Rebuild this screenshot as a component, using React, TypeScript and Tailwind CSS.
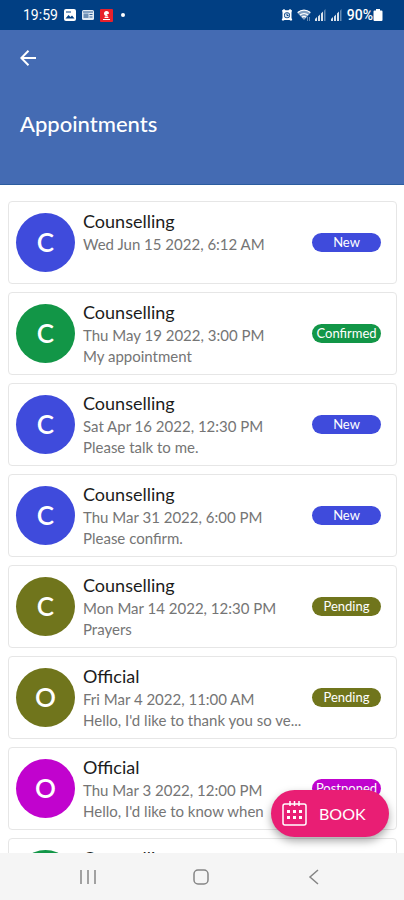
import React from 'react';

type Status = 'New' | 'Confirmed' | 'Pending' | 'Postponed';

interface Appointment {
  id: number;
  type: string;
  date: string;
  note?: string;
  status: Status;
}

const appointments: Appointment[] = [
  { id: 1, type: 'Counselling', date: 'Wed Jun 15 2022, 6:12 AM', status: 'New' },
  { id: 2, type: 'Counselling', date: 'Thu May 19 2022, 3:00 PM', note: 'My appointment', status: 'Confirmed' },
  { id: 3, type: 'Counselling', date: 'Sat Apr 16 2022, 12:30 PM', note: 'Please talk to me.', status: 'New' },
  { id: 4, type: 'Counselling', date: 'Thu Mar 31 2022, 6:00 PM', note: 'Please confirm.', status: 'New' },
  { id: 5, type: 'Counselling', date: 'Mon Mar 14 2022, 12:30 PM', note: 'Prayers', status: 'Pending' },
  { id: 6, type: 'Official', date: 'Fri Mar 4 2022, 11:00 AM', note: "Hello, I'd like to thank you so ve...", status: 'Pending' },
  { id: 7, type: 'Official', date: 'Thu Mar 3 2022, 12:00 PM', note: "Hello, I'd like to know when", status: 'Postponed' },
  { id: 8, type: 'Counselling', date: 'Wed Mar 2 2022, 10:00 AM', status: 'Confirmed' },
];

const statusColors: Record<Status, string> = {
  New: 'bg-[#3f4bdc]',
  Confirmed: 'bg-[#129647]',
  Pending: 'bg-[#70751c]',
  Postponed: 'bg-[#c103ce]',
};

const SignalIcon: React.FC = () => (
  <svg className="h-3.5 w-3" viewBox="0 0 12 14" fill="#fff" aria-hidden="true">
    <path d="M0 13v-2l2-2v4zM3 13V8.500l2-2V13zM6 13V5.500L8 3.500V13z" opacity=".85" />
    <path d="M9 13V2.500l1.500-1.500v12z" opacity=".4" />
  </svg>
);

const StatusBar: React.FC = () => (
  <div className="flex h-[30px] shrink-0 items-center justify-between bg-[#013f83] pr-[21px] pl-[23px] font-[Roboto,sans-serif] text-sm text-white">
    <div className="flex items-center gap-1.5">
      <span>19:59</span>
      <svg className="h-3 w-3" viewBox="0 0 12 12" aria-hidden="true">
        <rect width="12" height="12" rx="2" fill="#fff" />
        <path d="M1.500 9.500 4.500 6l2 2L8 6.500l2.500 3z" fill="#013f83" />
        <path d="M2 2.500h5v1H2z" fill="#013f83" />
      </svg>
      <svg className="h-3 w-3" viewBox="0 0 12 12" aria-hidden="true">
        <rect y="1" width="12" height="10" rx="1.500" fill="#dfe9f3" />
        <path d="M1.500 4.500h5v4.500h-5z" fill="#6d8fb4" />
        <path d="M1 2.500h10v1H1zM7.500 5h3v1h-3zM7.500 7.500h3v1h-3z" fill="#2d5f96" />
      </svg>
      <svg className="h-[13px] w-[13px]" viewBox="0 0 13 13" aria-hidden="true">
        <rect width="13" height="13" rx="1" fill="#e8212b" />
        <path d="M6.500 2a2.500 2.500 0 1 0 1.700 4.300L6.500 5.500l2.400-.7A2.500 2.500 0 0 0 6.500 2zM5 7.500h3l.7 1.500H4.300zM3 10h7v1H3z" fill="#fff" />
      </svg>
      <span className="ml-0.5 h-1 w-1 rounded-full bg-white" />
    </div>
    <div className="flex items-center">
      <svg className="h-3 w-3" viewBox="0 0 12 12" aria-hidden="true">
        <path d="M1 1.500 3 0l1.500 1.200h3L9 0l2 1.500-.5 2V9l.8 2-1.300.8L8.500 11h-5l-1.500.8L.7 11l.8-2V3.500z" fill="#fff" />
        <circle cx="6" cy="6.200" r="3" fill="#013f83" />
        <circle cx="6" cy="6.200" r="2.200" fill="#dbe6f1" />
        <path d="M6 4.500v2h1.500" stroke="#013f83" fill="none" />
      </svg>
      <svg className="ml-1 h-3.5 w-3.5" viewBox="0 0 14 14" aria-hidden="true">
        <path d="M0 4.500C4 1 10 1 14 4.500L7 12z" fill="#fff" opacity=".5" />
        <path d="M.8 4.500C4.500 1.300 9.500 1.300 13.200 4.500M3 7c2.300-2 5.700-2 8 0M5 9.200c1.200-1 2.800-1 4 0" stroke="#fff" strokeWidth="1.200" fill="none" />
        <path d="M10.500 9v4M12.500 9v4" stroke="#fff" opacity=".4" />
      </svg>
      <span className="ml-1 flex gap-1">
        <SignalIcon />
        <SignalIcon />
      </span>
      <span className="ml-1 font-medium">90%</span>
      <svg className="h-3 w-2.5" viewBox="0 0 10 12" fill="#fff" aria-hidden="true">
        <path d="M3 0h4v1.500h1.500q1 0 1 1V11q0 1-1 1h-7q-1 0-1-1V2.500q0-1 1-1H3z" />
      </svg>
    </div>
  </div>
);

const AppointmentCard: React.FC<{ appointment: Appointment }> = ({ appointment }) => {
  const { type, date, note, status } = appointment;

  return (
    <li className="flex min-h-[83px] shrink-0 items-center rounded border border-[#e6e6e6] bg-white pr-[15px] pl-[7px]">
      <div
        className={`flex h-[59px] w-[59px] shrink-0 items-center justify-center rounded-full pb-0.5 text-[26px] leading-none font-semibold text-white ${statusColors[status]}`}
      >
        {type[0]}
      </div>
      <div className="ml-2 min-w-0 flex-1 self-start pt-[7px]">
        <h2 className="text-lg leading-6 text-[#1c1c1c]">{type}</h2>
        <p className="text-[15px] leading-[22px] whitespace-nowrap text-[#757575]">{date}</p>
        {note && <p className="truncate text-[15px] leading-[21px] text-[#757575]">{note}</p>}
      </div>
      <span
        className={`flex h-[19px] w-[69px] shrink-0 items-center justify-center rounded-full pb-px text-[13px] leading-none text-white ${statusColors[status]}`}
      >
        {status}
      </span>
    </li>
  );
};

export default function App() {
  return (
    <div className="flex h-screen flex-col overflow-hidden bg-white font-[Lato,sans-serif]">
      <StatusBar />
      <header className="shrink-0 border-b border-[#2c5c9f] bg-[#446bb3] px-5 pt-[18px] pb-[46px] text-white">
        <button type="button" aria-label="Back" className="block">
          <svg className="h-5 w-4" viewBox="0 0 16 20" fill="none" stroke="#fff" strokeWidth="2" aria-hidden="true">
            <path d="M16 10H1.500M8.500 2.800 1.300 10l7.200 7.200" />
          </svg>
        </button>
        <h1 className="mt-[42px] text-[22px] leading-7 font-medium">Appointments</h1>
      </header>

      <main className="relative min-h-0 flex-1">
        <ul className="flex h-full flex-col gap-2 overflow-hidden pt-4 pr-[7px] pl-2">
          {appointments.map((appointment) => (
            <AppointmentCard key={appointment.id} appointment={appointment} />
          ))}
        </ul>

        <button
          type="button"
          className="absolute right-[15px] bottom-4 flex h-[47px] w-[118px] items-center rounded-full bg-[#e91e74] pl-[11px] text-base text-white shadow-[0_4px_8px_rgba(0,0,0,0.35)]"
        >
          <svg className="h-[25px] w-[25px]" viewBox="0 0 25 25" aria-hidden="true">
            <path
              d="M3 3h19q2 0 2 2v17q0 2-2 2H3q-2 0-2-2V5q0-2 2-2zM8 0v5M12.500 0v5M17 0v5"
              fill="none"
              stroke="#fff"
              strokeWidth="1.500"
            />
            <path
              d="M5 9h3v3H5zM11 9h3v3h-3zM17 9h3v3h-3zM5 15h3v3H5zM11 15h3v3h-3zM17 15h3v3h-3z"
              fill="#fff"
            />
          </svg>
          <span className="ml-3">BOOK</span>
        </button>
      </main>

      <nav className="flex h-[47px] shrink-0 items-center justify-between bg-[#f5f5f5] pr-[82px] pl-20 text-[#858585]">
        <button type="button" aria-label="Recent apps">
          <svg className="h-4 w-4" viewBox="0 0 16 16" stroke="currentColor" strokeWidth="1.500" aria-hidden="true">
            <path d="M1 1v14M8 1v14M15 1v14" />
          </svg>
        </button>
        <button type="button" aria-label="Home">
          <svg className="h-4 w-4" viewBox="0 0 16 16" fill="none" stroke="currentColor" strokeWidth="1.500" aria-hidden="true">
            <rect x="1" y="1" width="14" height="14" rx="4" />
          </svg>
        </button>
        <button type="button" aria-label="Back to previous app">
          <svg className="h-4 w-4" viewBox="0 0 16 16" fill="none" stroke="currentColor" strokeWidth="1.500" aria-hidden="true">
            <path d="M12 1 4 8l8 7" />
          </svg>
        </button>
      </nav>
    </div>
  );
}
